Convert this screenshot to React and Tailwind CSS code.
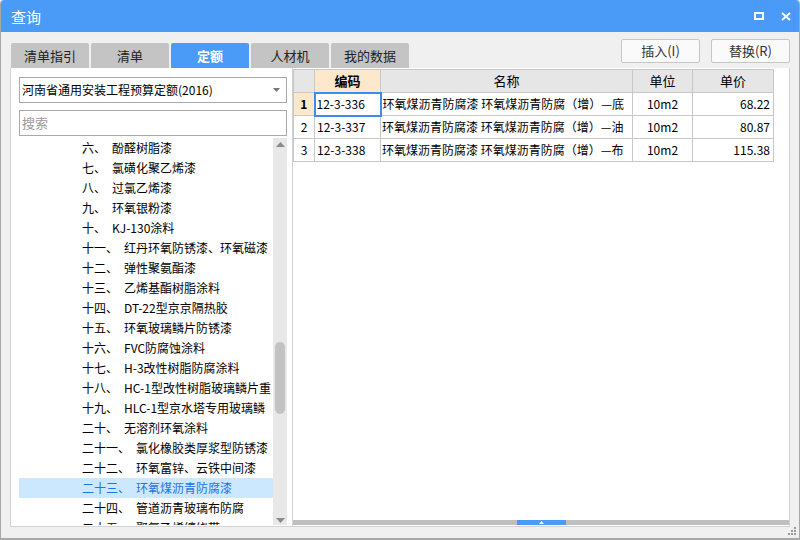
import React from "react";

const FONT = { fontFamily: '"Noto Sans CJK SC", "Liberation Sans", sans-serif' };

const items = [
  ["六、", "酚醛树脂漆"],
  ["七、", "氯磺化聚乙烯漆"],
  ["八、", "过氯乙烯漆"],
  ["九、", "环氧银粉漆"],
  ["十、", "KJ-130涂料"],
  ["十一、", "红丹环氧防锈漆、环氧磁漆"],
  ["十二、", "弹性聚氨酯漆"],
  ["十三、", "乙烯基酯树脂涂料"],
  ["十四、", "DT-22型京京隔热胶"],
  ["十五、", "环氧玻璃鳞片防锈漆"],
  ["十六、", "FVC防腐蚀涂料"],
  ["十七、", "H-3改性树脂防腐涂料"],
  ["十八、", "HC-1型改性树脂玻璃鳞片重"],
  ["十九、", "HLC-1型京水塔专用玻璃鳞"],
  ["二十、", "无溶剂环氧涂料"],
  ["二十一、", "氯化橡胶类厚浆型防锈漆"],
  ["二十二、", "环氧富锌、云铁中间漆"],
  ["二十三、", "环氧煤沥青防腐漆"],
  ["二十四、", "管道沥青玻璃布防腐"],
  ["二十五、", "聚氯乙烯缠绕带"],
];

const rows = [
  ["12-3-336", "环氧煤沥青防腐漆 环氧煤沥青防腐（增）—底", "10m2", "68.22"],
  ["12-3-337", "环氧煤沥青防腐漆 环氧煤沥青防腐（增）—油", "10m2", "80.87"],
  ["12-3-338", "环氧煤沥青防腐漆 环氧煤沥青防腐（增）—布", "10m2", "115.38"],
];

const tabs = ["清单指引", "清单", "定额", "人材机", "我的数据"];

export default function App() {
  return (
    <div
      className="relative w-[800px] h-[540px] flex flex-col bg-[#f0f0f0] border-x border-b-2 border-[#a8a8a8] rounded-t-[4px] overflow-hidden"
      style={FONT}
    >
      {/* Title bar */}
      <div className="h-[32px] shrink-0 bg-[#4a9bf8] flex items-center pl-[11px] pr-[9px] -mx-px">
        <span className="text-white text-[15px] leading-none">查询</span>
        <div className="ml-auto flex items-center gap-[17px]">
          <svg width="10" height="8" viewBox="0 0 10 8">
            <rect x="1" y="1" width="8" height="6" fill="none" stroke="white" strokeWidth="2" />
          </svg>
          <svg width="10" height="9" viewBox="0 0 10 9">
            <path d="M1 1 L9 8 M9 1 L1 8" stroke="white" strokeWidth="2" />
          </svg>
        </div>
      </div>

      {/* Body */}
      <div className="flex-1 flex flex-col px-[9px]">
        {/* Tabs & buttons */}
        <div className="h-[36px] shrink-0 flex">
          <div className="self-end flex gap-[2px] pl-[1px]">
            {tabs.map((t, i) => (
              <div
                key={t}
                className={
                  i === 2
                    ? "w-[78px] h-[25px] rounded-t-[2px] bg-[#4a9bf8] text-white font-bold text-[13px] flex items-center justify-center"
                    : "w-[78px] h-[25px] rounded-t-[2px] bg-[#c4c4c4] text-[#222] text-[13px] flex items-center justify-center"
                }
              >
                {t}
              </div>
            ))}
          </div>
          <div className="ml-auto mt-[7px] flex gap-[11px] self-start">
            {["插入(I)", "替换(R)"].map((b) => (
              <div
                key={b}
                className="w-[79px] h-[24px] rounded-[2px] bg-[#fafafa] border border-[#c6c6c6] text-[13px] text-[#333] flex items-center justify-center"
              >
                {b}
              </div>
            ))}
          </div>
        </div>

        {/* Main area */}
        <div className="h-[459px] shrink-0 flex bg-white border-x border-b border-[#d2d2d2]">
          {/* Left panel */}
          <div className="w-[281px] shrink-0 flex flex-col pl-[8px] pr-[5px] pt-[9px]">
            <div className="h-[26px] border border-[#a9a9a9] flex items-center pl-[2px] pr-[6px] text-[12px] text-black">
              <span>河南省通用安装工程预算定额(2016)</span>
              <svg className="ml-auto" width="7" height="4" viewBox="0 0 7 4">
                <path d="M0 0 H7 L3.5 4 Z" fill="#777" />
              </svg>
            </div>
            <div className="mt-[7px] h-[26px] border border-[#a9a9a9] flex items-center pl-[2px] text-[13px] text-[#9a9a9a]">
              搜索
            </div>
            <div className="mt-[2px] flex h-[387px] overflow-hidden">
              <div className="flex-1 flex flex-col">
                {items.map(([n, t], i) => (
                  <div
                    key={n}
                    className={
                      i === 17
                        ? "h-[20px] shrink-0 flex items-center pl-[63px] text-[12px] bg-[#cce8ff] text-[#1e74e0]"
                        : "h-[20px] shrink-0 flex items-center pl-[63px] text-[12px] text-black"
                    }
                  >
                    <span>{n}</span>
                    <span className="ml-[6px] whitespace-nowrap">{t}</span>
                  </div>
                ))}
              </div>
              <div className="w-[14px] shrink-0 bg-[#e8e8e8] relative flex flex-col items-center">
                <svg className="mt-[4px]" width="9" height="5" viewBox="0 0 9 5">
                  <path d="M0 5 L4.5 0 L9 5 Z" fill="#8a8a8a" />
                </svg>
                <div className="mt-[195px] w-[10px] h-[72px] rounded-[5px] bg-[#c2c2c2]" />
                <svg className="mt-auto mb-[2px]" width="9" height="5" viewBox="0 0 9 5">
                  <path d="M0 0 L9 0 L4.5 5 Z" fill="#8a8a8a" />
                </svg>
              </div>
            </div>
          </div>

          {/* Right panel */}
          <div className="flex-1 flex flex-col border-l border-[#d2d2d2] pt-[1px]">
            <div className="flex-1">
              <table className="border-collapse text-[12px] text-black table-fixed">
                <colgroup>
                  <col style={{ width: 21 }} />
                  <col style={{ width: 66 }} />
                  <col style={{ width: 252 }} />
                  <col style={{ width: 60 }} />
                  <col style={{ width: 81 }} />
                </colgroup>
                <thead>
                  <tr className="h-[23px] text-[13px]">
                    <th className="border border-[#c8c8c8] bg-[#e6e6e6] font-normal"></th>
                    <th className="border border-[#c8c8c8] bg-[#fde8cb] font-bold">编码</th>
                    <th className="border border-[#c8c8c8] bg-[#e6e6e6] font-normal">名称</th>
                    <th className="border border-[#c8c8c8] bg-[#e6e6e6] font-normal">单位</th>
                    <th className="border border-[#c8c8c8] bg-[#e6e6e6] font-normal">单价</th>
                  </tr>
                </thead>
                <tbody>
                  {rows.map((r, i) => (
                    <tr key={r[0]} className="h-[23px]">
                      <td
                        className={
                          i === 0
                            ? "border border-[#c8c8c8] bg-[#fde8cb] font-bold text-center"
                            : "border border-[#c8c8c8] text-center"
                        }
                      >
                        {i + 1}
                      </td>
                      <td
                        className={
                          i === 0
                            ? "border-2 border-[#3c8df0] pl-[1px]"
                            : "border border-[#c8c8c8] pl-[2px]"
                        }
                      >
                        {r[0]}
                      </td>
                      <td className="border border-[#c8c8c8] pl-[1px] whitespace-nowrap overflow-hidden">{r[1]}</td>
                      <td className="border border-[#c8c8c8] text-center">{r[2]}</td>
                      <td className="border border-[#c8c8c8] text-right pr-[3px]">{r[3]}</td>
                    </tr>
                  ))}
                </tbody>
              </table>
            </div>
            <div className="h-[5px] shrink-0 bg-[#bfbfbf] flex justify-center mb-[1px]">
              <div className="w-[49px] h-[5px] bg-[#4a9bf8] flex items-center justify-center">
                <svg width="5" height="3" viewBox="0 0 5 3">
                  <path d="M0 3 L2.5 0 L5 3 Z" fill="white" />
                </svg>
              </div>
            </div>
          </div>
        </div>
      </div>

      {/* Resize grip */}
      <svg className="absolute right-[2px] bottom-[2px]" width="10" height="10" viewBox="0 0 10 10">
        <rect x="7" y="1" width="2" height="2" fill="#9a9a9a" />
        <rect x="4" y="4" width="2" height="2" fill="#9a9a9a" />
        <rect x="7" y="4" width="2" height="2" fill="#9a9a9a" />
        <rect x="1" y="7" width="2" height="2" fill="#9a9a9a" />
        <rect x="4" y="7" width="2" height="2" fill="#9a9a9a" />
        <rect x="7" y="7" width="2" height="2" fill="#9a9a9a" />
      </svg>
    </div>
  );
}
